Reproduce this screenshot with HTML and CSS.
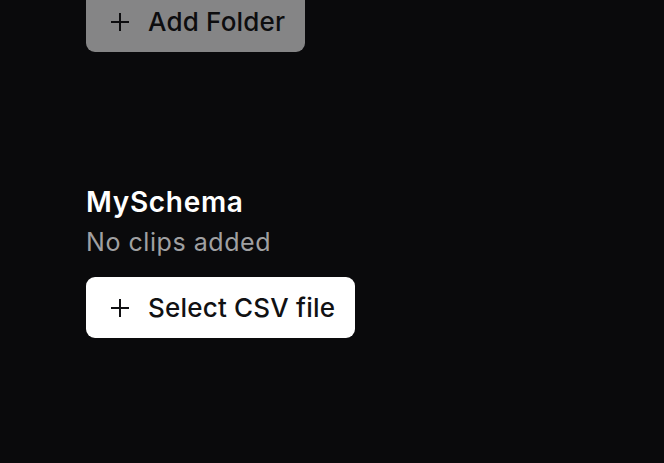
FILE: index.html
```html
<!DOCTYPE html>
<html>
<head>
<meta charset="utf-8">
<link rel="stylesheet" href="styles.css">
</head>
<body>
<main class="page">
  <section class="folders">
    <button class="btn btn-disabled" disabled>
      <svg class="plus" viewBox="0 0 20 20" width="20" height="20"><path d="M10 1v18M1 10h18" stroke="currentColor" stroke-width="2" fill="none"/></svg>
      <span>Add Folder</span>
    </button>
  </section>
  <section class="schema">
    <h2 class="schema-title">MySchema</h2>
    <p class="schema-sub">No clips added</p>
    <button class="btn">
      <svg class="plus" viewBox="0 0 20 20" width="20" height="20"><path d="M10 1v18M1 10h18" stroke="currentColor" stroke-width="2" fill="none"/></svg>
      <span>Select CSV file</span>
    </button>
  </section>
</main>
</body>
</html>
```
FILE: styles.css
```css
html, body {
  margin: 0;
  padding: 0;
  background: #0a0a0c;
  height: 100%;
  overflow: hidden;
}
.page {
  font-family: Inter, "Noto Sans", sans-serif;
  padding-left: 86px;
  display: flex;
  flex-direction: column;
  align-items: flex-start;
}
.folders {
  margin-top: -9px;
}
.btn {
  display: inline-flex;
  align-items: center;
  gap: 18px;
  height: 61px;
  padding: 0 20px 0 24px;
  border: none;
  border-radius: 9px;
  background: #ffffff;
  color: #111113;
  font-family: inherit;
  font-size: 26px;
  font-weight: 500;
  letter-spacing: 0.2px;
}
.btn-disabled {
  opacity: 0.5;
}
.plus {
  flex: none;
}
.schema {
  margin-top: 133px;
  display: flex;
  flex-direction: column;
  align-items: flex-start;
}
.schema-title {
  margin: 0;
  color: #ffffff;
  font-size: 28px;
  font-weight: 600;
  line-height: 34px;
  letter-spacing: 0.7px;
}
.schema-sub {
  margin: 8px 0 0;
  color: #a0a0a2;
  font-size: 25px;
  line-height: 30px;
  letter-spacing: 0.55px;
}
.schema .btn {
  margin-top: 20px;
}
```
